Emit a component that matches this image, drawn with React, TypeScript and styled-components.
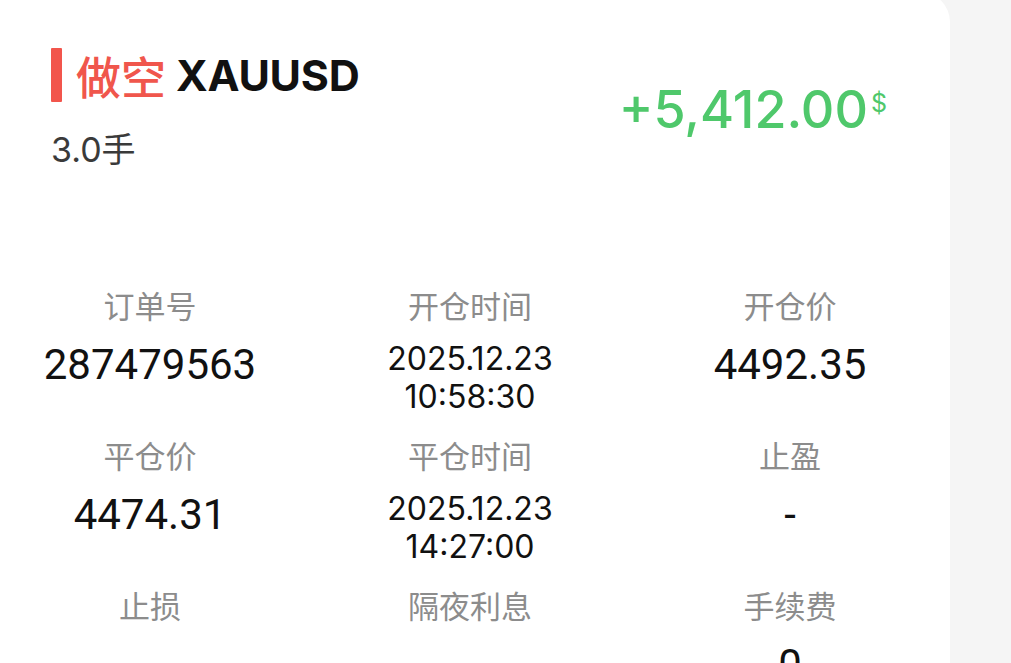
import React from 'react';
import styled, { createGlobalStyle } from 'styled-components';

const GlobalStyle = createGlobalStyle`
  html, body {
    margin: 0;
    padding: 0;
    background: #f5f5f5;
    overflow: hidden;
  }
  body {
    font-family: Inter, "Noto Sans CJK SC", sans-serif;
  }
`;

const Page = styled.div`
  display: flex;
  width: 1011px;
  height: 663px;
  background: #f5f5f5;
  overflow: hidden;
`;

const Card = styled.div`
  width: 950px;
  height: 720px;
  margin-top: -8px;
  background: #ffffff;
  border-top-right-radius: 30px;
  display: flex;
  flex-direction: column;
`;

const Header = styled.div`
  display: flex;
  justify-content: space-between;
  padding: 56px 63px 0 51px;
  height: 245px;
  box-sizing: border-box;
`;

const TitleBlock = styled.div`
  display: flex;
  flex-direction: column;
`;

const TitleRow = styled.div`
  display: flex;
  align-items: center;
  height: 54px;
`;

const SideBar = styled.div`
  width: 11px;
  height: 54px;
  background: #f2554c;
  border-radius: 1px;
  margin-right: 14px;
`;

const Direction = styled.span`
  font-family: "Noto Sans CJK SC", sans-serif;
  font-size: 45px;
  font-weight: 500;
  color: #f0564c;
  margin-right: 10px;
`;

const Symbol = styled.span`
  font-family: Inter, sans-serif;
  font-size: 43px;
  font-weight: 700;
  color: #111111;
  letter-spacing: -0.3px;
`;

const Lots = styled.div`
  font-family: Inter, "Noto Sans CJK SC", sans-serif;
  font-size: 34px;
  color: #3a3a3a;
  margin-top: 28px;
  line-height: 40px;
`;

const Profit = styled.div`
  display: flex;
  align-items: flex-start;
  margin-top: 31px;
  color: #4fc86b;
  font-family: Inter, sans-serif;
`;

const ProfitValue = styled.span`
  font-size: 52px;
  font-weight: 500;
  line-height: 62px;
`;

const Currency = styled.span`
  font-size: 25px;
  line-height: 25px;
  margin-top: 12px;
  margin-left: 3px;
`;

const Grid = styled.div`
  display: grid;
  grid-template-columns: repeat(3, 300px);
  column-gap: 20px;
  row-gap: 19px;
  padding-top: 48px;
`;

const Cell = styled.div`
  display: flex;
  flex-direction: column;
  align-items: center;
`;

const Label = styled.div`
  font-family: "Noto Sans CJK SC", sans-serif;
  font-size: 31px;
  line-height: 40px;
  color: #8c8c8c;
`;

const Value = styled.div<{ $big?: boolean }>`
  margin-top: 15px;
  font-family: ${(p) => (p.$big ? 'Roboto' : 'Inter')}, sans-serif;
  font-size: ${(p) => (p.$big ? '42px' : '32px')};
  line-height: ${(p) => (p.$big ? '50px' : '38px')};
  color: #111111;
  text-align: center;
`;

type Item = { label: string; value: string[]; big?: boolean };

const items: Item[] = [
  { label: '订单号', value: ['287479563'], big: true },
  { label: '开仓时间', value: ['2025.12.23', '10:58:30'] },
  { label: '开仓价', value: ['4492.35'], big: true },
  { label: '平仓价', value: ['4474.31'], big: true },
  { label: '平仓时间', value: ['2025.12.23', '14:27:00'] },
  { label: '止盈', value: ['-'], big: true },
  { label: '止损', value: [''], big: true },
  { label: '隔夜利息', value: [''], big: true },
  { label: '手续费', value: ['0'], big: true },
];

export default function App() {
  return (
    <>
      <GlobalStyle />
      <Page>
        <Card>
          <Header>
            <TitleBlock>
              <TitleRow>
                <SideBar />
                <Direction>做空</Direction>
                <Symbol>XAUUSD</Symbol>
              </TitleRow>
              <Lots>3.0手</Lots>
            </TitleBlock>
            <Profit>
              <ProfitValue>+5,412.00</ProfitValue>
              <Currency>$</Currency>
            </Profit>
          </Header>
          <Grid>
            {items.map((it) => (
              <Cell key={it.label}>
                <Label>{it.label}</Label>
                <Value $big={it.big}>
                  {it.value.map((line, i) => (
                    <div key={i}>{line || '\u00a0'}</div>
                  ))}
                </Value>
              </Cell>
            ))}
          </Grid>
        </Card>
      </Page>
    </>
  );
}
